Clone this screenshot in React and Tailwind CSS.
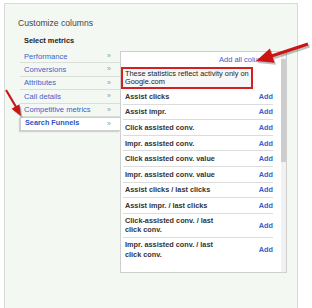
const menu = [
  'Performance',
  'Conversions',
  'Attributes',
  'Call details',
  'Competitive metrics',
]

const rows = [
  'Assist clicks',
  'Assist impr.',
  'Click assisted conv.',
  'Impr. assisted conv.',
  'Click assisted conv. value',
  'Impr. assisted conv. value',
  'Assist clicks / last clicks',
  'Assist impr. / last clicks',
  'Click-assisted conv. / last click conv.',
  'Impr. assisted conv. / last click conv.',
]

function Arrows() {
  return (
    <svg className="absolute left-0 top-0 pointer-events-none" width="312" height="308" viewBox="0 0 312 308">
      {/* shadows */}
      <g fill="#000" stroke="#000" opacity="0.25" transform="translate(1.5 2)">
        <line x1="308" y1="44" x2="270" y2="56.5" strokeWidth="3" />
        <polygon points="256,61 274.5,62.8 269.9,48.6" stroke="none" />
        <line x1="6" y1="90" x2="16" y2="107" strokeWidth="2" />
        <polygon points="21,116 19.4,104.2 11.6,108.7" stroke="none" />
      </g>
      <g fill="#cc1414" stroke="#cc1414">
        <line x1="308" y1="44" x2="270" y2="56.5" strokeWidth="3" />
        <polygon points="256,61 274.5,62.8 269.9,48.6" stroke="none" />
        <line x1="6" y1="90" x2="16" y2="107" strokeWidth="2" />
        <polygon points="21,116 19.4,104.2 11.6,108.7" stroke="none" />
      </g>
    </svg>
  )
}

export default function App() {
  return (
    <div className="relative w-[312px] h-[308px] overflow-hidden bg-white font-['Liberation_Sans',Arial,sans-serif]">
      <div className="h-[3px] overflow-hidden pl-[25px]">
        <div className="-mt-[6px] text-[7.5px] leading-[8px] text-[#c4c4c4]">Attributes</div>
      </div>

      <div className="ml-[4px] w-[294px] h-[320px] border-l border-t border-r border-[#d6dbd6] bg-[#f4f8f3]">
        <div className="pl-[13px] pt-[14px] text-[8.6px] leading-[10px] text-[#444]">Customize columns</div>
        <div className="pl-[19px] mt-[8px] text-[7.4px] leading-[10px] font-bold text-[#222]">Select metrics</div>

        <div className="flex pl-[15px] mt-[5px]">
          {/* left menu */}
          <div className="w-[100px] -mt-[1px]">
            {menu.map((m) => (
              <div
                key={m}
                className="h-[13.4px] flex items-center justify-between pl-[4px] pr-[9px] border-b border-[#d9ded9] text-[7.6px] text-[#3b62c9]"
              >
                <span>{m}</span>
                <span className="text-[#9a9a9a] text-[7px]">»</span>
              </div>
            ))}
            <div className="h-[14px] flex items-center justify-between pl-[4px] pr-[9px] bg-white border border-r-0 border-[#cfcfcf] shadow-[-1px_1px_1px_rgba(0,0,0,0.15)] text-[7.3px] font-bold text-[#2c55c2]">
              <span>Search Funnels</span>
              <span className="text-[#9a9a9a] text-[7px] font-normal">»</span>
            </div>
          </div>

          {/* right panel */}
          <div className="flex h-[222px] border border-[#cfcfcf] bg-white">
            <div className="w-[160px]">
              <div className="h-[15px] flex items-center pl-[98px]">
                <span className="w-[40px] overflow-hidden whitespace-nowrap text-[7.5px] text-[#3b62c9]">Add all columns</span>
              </div>
              <div className="w-[132px] h-[22px] border-2 border-[#d42020] bg-[#f7f7f7] pl-[2px] py-[1px] text-[7.4px] leading-[8px] text-[#222]">
                These statistics reflect activity only on<br />Google.com
              </div>
              <div className="ml-[2px] mr-[8px]">
                {rows.map((r, i) => (
                  <div
                    key={r}
                    className={`flex items-center justify-between pl-[2px] border-b border-[#dcdcdc] last:border-b-0 text-[7.3px] font-bold ${
                      i >= 8 ? 'h-[24px] leading-[9.5px]' : 'h-[15.6px] leading-[9px]'
                    }`}
                  >
                    <span className="w-[100px] text-[#333]">{r}</span>
                    <span className="text-[#3a5cc8]">Add</span>
                  </div>
                ))}
              </div>
            </div>
            <div className="w-[5px] bg-[#f1f1f1] pt-[7px]">
              <div className="h-[103px] bg-[#cdcdcd]" />
            </div>
          </div>
        </div>
      </div>

      <Arrows />
    </div>
  )
}
